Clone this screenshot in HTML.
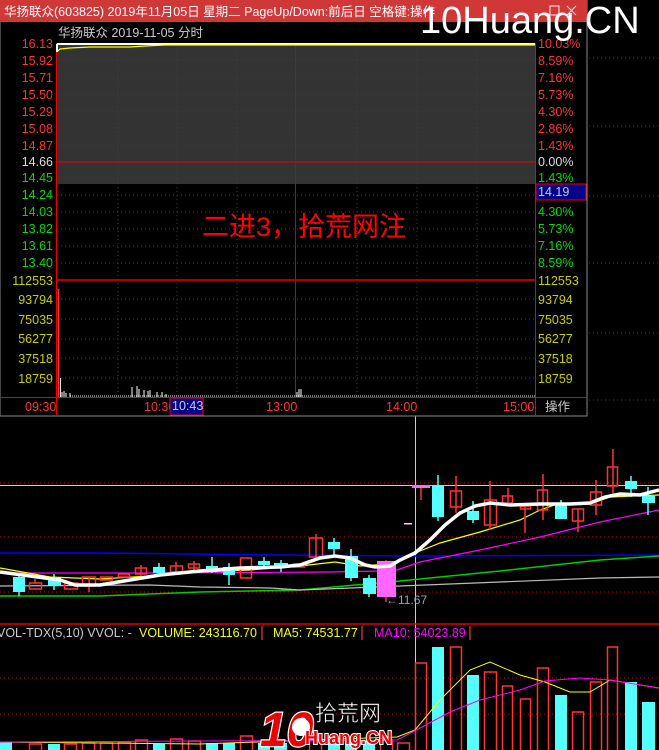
<!DOCTYPE html>
<html><head><meta charset="utf-8"><style>
html,body{margin:0;padding:0;background:#000;width:659px;height:750px;overflow:hidden}
svg{display:block}
text{font-family:"Liberation Sans","Noto Sans CJK SC",sans-serif}
</style></head><body>
<svg width="659" height="750" viewBox="0 0 659 750" xmlns="http://www.w3.org/2000/svg">
<rect width="659" height="750" fill="#000"/>
<g stroke="#c00" stroke-width="1" stroke-dasharray="1,3">
<line x1="0" y1="483" x2="659" y2="483"/>
<line x1="0" y1="537" x2="659" y2="537"/>
<line x1="0" y1="592" x2="659" y2="592"/>
<line x1="0" y1="678" x2="659" y2="678"/>
<line x1="0" y1="714" x2="659" y2="714"/>
</g>
<line x1="0" y1="485.5" x2="659" y2="485.5" stroke="#ccc"/>
<line x1="415.5" y1="416" x2="415.5" y2="750" stroke="#ccc"/>
<line x1="0" y1="624" x2="659" y2="624" stroke="#d00" stroke-width="1.5"/>
<polyline fill="none" stroke="#00f" stroke-width="1.5" points="0,553 100,553 280,555 415,556 659,555"/>
<polyline fill="none" stroke="#0c0" stroke-width="1.5" points="0,596 100,596 200,592 300,590 400,581 500,571 600,560 659,556"/>
<polyline fill="none" stroke="#bbb" stroke-width="1.2" points="0,586 150,585 200,587 270,588 300,590 400,586 500,582 600,578 659,577"/>
<polyline fill="none" stroke="#f0f" stroke-width="1.2" points="0,573 150,573 330,572 380,571 397,570 420,562 480,550 540,537 600,522 659,510"/>
<polyline fill="none" stroke="#ff0" stroke-width="1.2" points="0,568 50,577 100,579 150,576 200,572 250,570 300,566 335,562 360,566 390,564 415,553 440,543 480,532 520,520 540,510 560,503 590,504 610,497 659,495"/>
<g stroke-width="1.5">
<line x1="19" y1="573" x2="19" y2="596" stroke="#5ff"/><rect x="13" y="577" width="12" height="15" fill="#5ff"/>
<line x1="35" y1="579" x2="35" y2="583" stroke="#f33"/><rect x="29.5" y="583" width="12" height="6" fill="none" stroke="#f33"/>
<line x1="54" y1="574" x2="54" y2="590" stroke="#5ff"/><rect x="48" y="578" width="13" height="8" fill="#5ff"/>
<rect x="64.5" y="583" width="13" height="6" fill="none" stroke="#f33"/>
<line x1="89" y1="577" x2="89" y2="592" stroke="#f33"/><rect x="82.5" y="577" width="13" height="9" fill="none" stroke="#f33"/>
<rect x="100.5" y="577" width="12" height="3" fill="none" stroke="#f33"/>
<rect x="118.5" y="574" width="11" height="3" fill="none" stroke="#f33"/>
<line x1="141" y1="565" x2="141" y2="576" stroke="#f33"/><rect x="135.5" y="568" width="11" height="6" fill="none" stroke="#f33"/>
<line x1="159" y1="563" x2="159" y2="575" stroke="#5ff"/><rect x="153" y="567" width="12" height="6" fill="#5ff"/>
<line x1="176" y1="562" x2="176" y2="574" stroke="#f33"/><rect x="170.5" y="566" width="12" height="6" fill="none" stroke="#f33"/>
<line x1="194" y1="561" x2="194" y2="570" stroke="#f33"/><rect x="188.5" y="564" width="11" height="4" fill="none" stroke="#f33"/>
<line x1="212" y1="557" x2="212" y2="573" stroke="#5ff"/><rect x="206" y="566" width="12" height="4" fill="#5ff"/>
<line x1="229" y1="563" x2="229" y2="585" stroke="#5ff"/><rect x="223" y="567" width="12" height="8" fill="#5ff"/>
<rect x="240.5" y="558" width="11" height="20" fill="none" stroke="#f33"/>
<line x1="264" y1="557" x2="264" y2="568" stroke="#5ff"/><rect x="258" y="561" width="12" height="4" fill="#5ff"/>
<line x1="281" y1="560" x2="281" y2="572" stroke="#5ff"/><rect x="274" y="563" width="14" height="5" fill="#5ff"/>
<rect x="293.5" y="564" width="11" height="3" fill="none" stroke="#f33"/>
<line x1="316" y1="534" x2="316" y2="558" stroke="#f33"/><rect x="309.5" y="538" width="13" height="19" fill="none" stroke="#f33"/>
<line x1="334" y1="538" x2="334" y2="555" stroke="#5ff"/><rect x="328" y="542" width="12" height="7" fill="#5ff"/>
<line x1="351" y1="549" x2="351" y2="581" stroke="#5ff"/><rect x="345" y="556" width="13" height="22" fill="#5ff"/>
<line x1="369" y1="575" x2="369" y2="597" stroke="#5ff"/><rect x="363" y="578" width="13" height="16" fill="#5ff"/>
<line x1="386" y1="560" x2="386" y2="602" stroke="#f33"/><rect x="377" y="561" width="19" height="36" fill="#f6f"/>
<text x="386" y="604" fill="#8ab" font-size="12">←11.67</text>
<rect x="404" y="523" width="8" height="1.5" fill="#fcf"/>
<line x1="421" y1="486" x2="421" y2="500" stroke="#f33"/><rect x="412" y="485" width="18" height="3" fill="#f6f"/>
<line x1="438" y1="475" x2="438" y2="521" stroke="#5ff"/><rect x="432" y="486" width="12" height="31" fill="#5ff"/>
<line x1="456" y1="476" x2="456" y2="513" stroke="#f33"/><rect x="450.5" y="491" width="11" height="16" fill="none" stroke="#f33"/>
<line x1="473" y1="501" x2="473" y2="523" stroke="#5ff"/><rect x="467" y="511" width="12" height="9" fill="#5ff"/>
<line x1="490" y1="481" x2="490" y2="530" stroke="#f33"/><rect x="484.5" y="500" width="12" height="25" fill="none" stroke="#f33"/>
<line x1="508" y1="488" x2="508" y2="503" stroke="#f33"/><rect x="502.5" y="496" width="10" height="7" fill="none" stroke="#f33"/>
<line x1="525" y1="506" x2="525" y2="533" stroke="#f33"/><rect x="520.5" y="506" width="10" height="3" fill="none" stroke="#f33"/>
<line x1="543" y1="474" x2="543" y2="520" stroke="#f33"/><rect x="537.5" y="490" width="10" height="20" fill="none" stroke="#f33"/>
<line x1="561" y1="500" x2="561" y2="519" stroke="#5ff"/><rect x="555" y="505" width="12" height="14" fill="#5ff"/>
<line x1="578" y1="509" x2="578" y2="532" stroke="#f33"/><rect x="572.5" y="509" width="11" height="12" fill="none" stroke="#f33"/>
<line x1="596" y1="480" x2="596" y2="515" stroke="#f33"/><rect x="590.5" y="492" width="11" height="13" fill="none" stroke="#f33"/>
<line x1="613" y1="449" x2="613" y2="495" stroke="#f33"/><rect x="607.5" y="467" width="10" height="19" fill="none" stroke="#f33"/>
<line x1="631" y1="476" x2="631" y2="497" stroke="#5ff"/><rect x="625" y="481" width="12" height="8" fill="#5ff"/>
<line x1="648" y1="487" x2="648" y2="515" stroke="#5ff"/><rect x="642" y="496" width="13" height="7" fill="#5ff"/>
</g>
<polyline fill="none" stroke="#fff" stroke-width="3.5" points="0,572 30,576 60,580 75,585 100,585 130,580 160,575 200,571 240,568 280,567 300,565 320,558 335,556 350,558 365,565 375,567 390,566 400,560 415,553 430,540 445,525 460,513 475,506 490,503 510,505 540,504 570,504 590,503 605,497 620,494 640,495 659,490"/>
<text x="-3" y="637" font-size="12.5" fill="#ccc">VOL-TDX(5,10) VVOL: -</text>
<text x="139" y="637" font-size="12.5" fill="#ff0">VOLUME: 243116.70</text>
<text x="273" y="637" font-size="12.5" fill="#ff0">MA5: 74531.77</text>
<text x="374" y="637" font-size="12.5" fill="#f0f">MA10: 54023.89</text>
<g stroke="#f33" stroke-width="1.2"><line x1="262" y1="626" x2="262" y2="640"/><line x1="362" y1="626" x2="362" y2="640"/><line x1="470" y1="626" x2="470" y2="640"/></g>
<g fill="#5ff">
<rect x="0" y="742" width="12" height="8"/><rect x="48" y="744" width="12" height="6"/><rect x="153" y="744" width="12" height="6"/><rect x="206" y="743" width="12" height="7"/><rect x="223" y="743" width="12" height="7"/><rect x="258" y="743" width="12" height="7"/><rect x="274" y="743" width="13" height="7"/><rect x="328" y="743" width="12" height="7"/><rect x="345" y="741" width="12" height="9"/><rect x="363" y="741" width="12" height="9"/>
<rect x="432" y="647" width="12" height="103"/><rect x="467" y="675" width="12" height="75"/><rect x="555" y="695" width="12" height="55"/><rect x="625" y="682" width="12" height="68"/><rect x="642" y="702" width="13" height="48"/>
</g>
<g fill="none" stroke="#f33" stroke-width="1.5">
<rect x="29.5" y="744" width="12" height="8"/><rect x="64.5" y="744" width="12" height="8"/><rect x="82.5" y="743" width="12" height="8"/><rect x="100.5" y="743" width="12" height="8"/><rect x="118.5" y="742" width="12" height="9"/><rect x="135.5" y="740" width="12" height="11"/><rect x="170.5" y="739" width="12" height="12"/><rect x="188.5" y="741" width="12" height="10"/><rect x="240.5" y="736" width="12" height="15"/><rect x="309.5" y="740" width="12" height="11"/><rect x="380.5" y="740" width="12" height="11"/><rect x="397.5" y="743" width="12" height="8"/>
<rect x="415.5" y="663" width="11" height="90"/><rect x="450.5" y="647" width="11" height="105"/><rect x="484.5" y="672" width="12" height="80"/><rect x="502.5" y="686" width="10" height="66"/><rect x="520.5" y="699" width="10" height="52"/><rect x="537.5" y="668" width="11" height="84"/><rect x="572.5" y="712" width="11" height="40"/><rect x="590.5" y="682" width="11" height="70"/><rect x="607.5" y="647" width="10" height="105"/>
</g>
<polyline fill="none" stroke="#ff0" stroke-width="1" points="0,742 200,744 397,737 415,730 440,700 470,670 490,662 520,675 545,682 570,692 590,692 610,680 659,688"/>
<polyline fill="none" stroke="#f0f" stroke-width="1" points="0,742 397,740 420,728 450,712 480,700 520,690 545,681 580,678 610,680 659,688"/>
<g>
<text x="260" y="746" font-size="48" font-weight="bold" fill="#e00" stroke="#fff" stroke-width="2.5" paint-order="stroke" font-style="italic">10</text>
<circle cx="301" cy="727" r="9" fill="#fff"/>
<text x="315" y="721" font-size="22" fill="#fff" stroke="#000" stroke-width="0.5">拾荒网</text>
<text x="305" y="744" font-size="18" font-weight="bold" fill="#e00" stroke="#fff" stroke-width="2" paint-order="stroke">Huang.CN</text>
</g>
<rect x="0" y="0" width="587" height="416" fill="#000" stroke="#888" stroke-width="1"/>
<rect x="0" y="0" width="587" height="22" fill="#d03838"/>
<text x="4" y="16" font-size="12.5" fill="#fff">华扬联众(603825) 2019年11月05日 星期二 PageUp/Down:前后日 空格键:操作</text>
<rect x="550" y="6" width="9" height="9" fill="none" stroke="#eee"/>
<path d="M567 6 L576 15 M576 6 L567 15" stroke="#eee"/>
<text x="58" y="37" font-size="12.5" fill="#ccc">华扬联众  2019-11-05 分时</text>
<rect x="57" y="43" width="478" height="141" fill="#333"/>
<g stroke="#c00" stroke-dasharray="1,3">
<line x1="57" y1="60" x2="535" y2="60"/><line x1="57" y1="77" x2="535" y2="77"/><line x1="57" y1="94" x2="535" y2="94"/><line x1="57" y1="111" x2="535" y2="111"/><line x1="57" y1="128" x2="535" y2="128"/><line x1="57" y1="145" x2="535" y2="145"/><line x1="57" y1="178" x2="535" y2="178"/><line x1="57" y1="195" x2="535" y2="195"/><line x1="57" y1="212" x2="535" y2="212"/><line x1="57" y1="229" x2="535" y2="229"/><line x1="57" y1="246" x2="535" y2="246"/><line x1="57" y1="263" x2="535" y2="263"/>
<line x1="57" y1="299" x2="535" y2="299"/><line x1="57" y1="319" x2="535" y2="319"/><line x1="57" y1="339" x2="535" y2="339"/><line x1="57" y1="358" x2="535" y2="358"/><line x1="57" y1="378" x2="535" y2="378"/>
<line x1="118" y1="43" x2="118" y2="397"/><line x1="177" y1="43" x2="177" y2="397"/><line x1="237" y1="43" x2="237" y2="397"/><line x1="357" y1="43" x2="357" y2="397"/><line x1="417" y1="43" x2="417" y2="397"/><line x1="477" y1="43" x2="477" y2="397"/>
<line x1="589" y1="58" x2="659" y2="58"/><line x1="589" y1="126" x2="659" y2="126"/><line x1="589" y1="196" x2="659" y2="196"/><line x1="589" y1="263" x2="659" y2="263"/><line x1="589" y1="333" x2="659" y2="333"/><line x1="589" y1="400" x2="659" y2="400"/>
</g>
<line x1="57" y1="162" x2="535" y2="162" stroke="#e00"/>
<line x1="57" y1="280" x2="535" y2="280" stroke="#e00" stroke-width="1.5"/>
<line x1="295.5" y1="43" x2="295.5" y2="397" stroke="#c00"/>
<line x1="56.5" y1="43" x2="56.5" y2="416" stroke="#e00"/>
<line x1="535.5" y1="43" x2="535.5" y2="416" stroke="#e00"/>
<line x1="0" y1="397.5" x2="587" y2="397.5" stroke="#e00"/>
<line x1="57" y1="44" x2="535" y2="44" stroke="#fff" stroke-width="2"/>
<polyline fill="none" stroke="#ff0" stroke-width="1.2" points="57,52 60,49 70,48 90,47 130,47 145,46 165,45 535,45"/>
<line x1="57" y1="44" x2="57" y2="52" stroke="#fff" stroke-width="2"/>
<g stroke="#fff" stroke-width="1">
<line x1="58.5" y1="289" x2="58.5" y2="397" stroke="#f33" stroke-width="1.5"/>
<line x1="60.5" y1="378" x2="60.5" y2="397"/><line x1="62" y1="392" x2="62" y2="397"/><line x1="64" y1="391" x2="64" y2="397"/><line x1="66" y1="393" x2="66" y2="397"/><line x1="70" y1="393" x2="70" y2="397"/>
<line x1="132" y1="387" x2="132" y2="397"/><line x1="137" y1="386" x2="137" y2="397"/><line x1="139" y1="389" x2="139" y2="397"/><line x1="144" y1="390" x2="144" y2="397"/><line x1="148" y1="391" x2="148" y2="397"/><line x1="150" y1="390" x2="150" y2="397"/><line x1="157" y1="392" x2="157" y2="397"/><line x1="162" y1="392" x2="162" y2="397"/><line x1="166" y1="394" x2="166" y2="397"/>
<line x1="297" y1="392" x2="297" y2="397"/><line x1="299" y1="389" x2="299" y2="397"/><line x1="301" y1="389" x2="301" y2="397"/>
</g>
<line x1="70" y1="396" x2="535" y2="396" stroke="#fff" stroke-dasharray="1,1"/>
<g font-size="12.5" text-anchor="end">
<text x="53" y="48" fill="#f33">16.13</text><text x="53" y="65" fill="#f33">15.92</text><text x="53" y="82" fill="#f33">15.71</text><text x="53" y="99" fill="#f33">15.50</text><text x="53" y="116" fill="#f33">15.29</text><text x="53" y="133" fill="#f33">15.08</text><text x="53" y="150" fill="#f33">14.87</text>
<text x="53" y="166" fill="#ddd">14.66</text>
<text x="53" y="182" fill="#0d0">14.45</text><text x="53" y="199" fill="#0d0">14.24</text><text x="53" y="216" fill="#0d0">14.03</text><text x="53" y="233" fill="#0d0">13.82</text><text x="53" y="250" fill="#0d0">13.61</text><text x="53" y="267" fill="#0d0">13.40</text>
<text x="53" y="285" fill="#cc0">112553</text><text x="53" y="304" fill="#cc0">93794</text><text x="53" y="324" fill="#cc0">75035</text><text x="53" y="343" fill="#cc0">56277</text><text x="53" y="363" fill="#cc0">37518</text><text x="53" y="383" fill="#cc0">18759</text>
</g>
<g font-size="12.5">
<text x="538" y="48" fill="#f33">10.03%</text><text x="538" y="65" fill="#f33">8.59%</text><text x="538" y="82" fill="#f33">7.16%</text><text x="538" y="99" fill="#f33">5.73%</text><text x="538" y="116" fill="#f33">4.30%</text><text x="538" y="133" fill="#f33">2.86%</text><text x="538" y="150" fill="#f33">1.43%</text>
<text x="538" y="166" fill="#ddd">0.00%</text>
<text x="538" y="182" fill="#0d0">1.43%</text><text x="538" y="216" fill="#0d0">4.30%</text><text x="538" y="233" fill="#0d0">5.73%</text><text x="538" y="250" fill="#0d0">7.16%</text><text x="538" y="267" fill="#0d0">8.59%</text>
<text x="538" y="285" fill="#cc0">112553</text><text x="538" y="304" fill="#cc0">93794</text><text x="538" y="324" fill="#cc0">75035</text><text x="538" y="343" fill="#cc0">56277</text><text x="538" y="363" fill="#cc0">37518</text><text x="538" y="383" fill="#cc0">18759</text>
</g>
<rect x="536" y="184" width="50" height="16" fill="#00008b" stroke="#e00"/>
<text x="538" y="196" font-size="12.5" fill="#ccd">14.19</text>
<text x="202" y="236" font-size="27" fill="#f00">二进3，拾荒网注</text>
<g font-size="12.5" fill="#f33">
<text x="25" y="411">09:30</text><text x="144" y="411">10:30</text><text x="266" y="411">13:00</text><text x="386" y="411">14:00</text><text x="503" y="411">15:00</text>
</g>
<rect x="170" y="398" width="33" height="17" fill="#00008b" stroke="#e00"/>
<text x="172" y="410" font-size="12.5" fill="#ccd">10:43</text>
<text x="545" y="411" font-size="12.5" fill="#ccc">操作</text>
<text x="420" y="33" font-size="38" fill="#fff">10Huang.CN</text>
</svg>
</body></html>
